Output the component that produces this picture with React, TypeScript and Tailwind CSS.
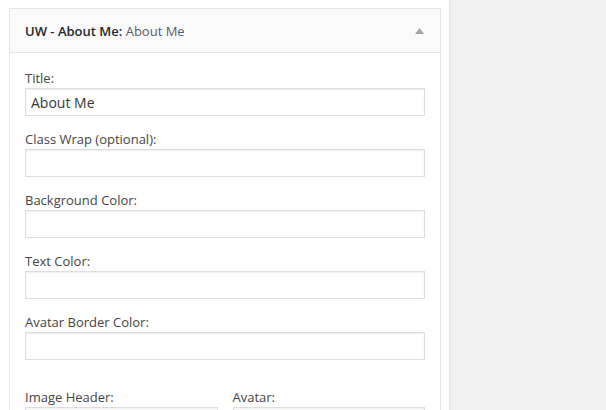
import React from "react";

function Field({ label, value }: { label: string; value?: string }) {
  return (
    <div className="flex flex-col">
      <label className="block h-[18px] text-[13px] leading-[18px] text-[#444]">{label}</label>
      <input
        readOnly
        value={value ?? ""}
        className="mt-[1px] box-border h-[28px] w-full border border-[#ddd] bg-white px-[5px] text-[14px] text-[#32373c] shadow-[inset_0_1px_2px_rgba(0,0,0,0.07)] outline-none"
        style={{ fontFamily: '"Open Sans", sans-serif' }}
      />
    </div>
  );
}

export default function App() {
  return (
    <div className="flex h-[410px] w-[606px] overflow-hidden bg-white" style={{ fontFamily: '"Open Sans", sans-serif' }}>
      <div className="w-[449px] shrink-0 pl-[9px] pt-[8px]">
        <div className="w-[432px] border border-[#e5e5e5] bg-white">
          <div className="flex h-[44px] items-center justify-between border-b border-[#e5e5e5] bg-[#fafafa] pl-[15px] pr-[16px]">
            <div className="text-[13px] leading-[18px]">
              <span className="font-semibold text-[#23282d]">UW - About Me:</span>
              <span className="text-[#555d66]"> About Me</span>
            </div>
            <svg width="9" height="6" viewBox="0 0 9 6" className="mt-[1px]">
              <polygon points="4.5,0 9,6 0,6" fill="#a0a5aa" />
            </svg>
          </div>
          <div className="flex flex-col px-[15px] pt-[16px] pb-[20px]">
            <div className="flex flex-col gap-[14px]">
              <Field label="Title:" value="About Me" />
              <Field label="Class Wrap (optional):" />
              <Field label="Background Color:" />
              <Field label="Text Color:" />
              <Field label="Avatar Border Color:" />
            </div>
            <div className="mt-[28px] grid grid-cols-2 gap-[15px]">
              <Field label="Image Header:" />
              <Field label="Avatar:" />
            </div>
          </div>
        </div>
      </div>
      <div className="h-full w-[2px] shrink-0 bg-[#e8e8e8]" />
      <div className="h-full flex-1 bg-[#f1f1f1]" />
    </div>
  );
}
